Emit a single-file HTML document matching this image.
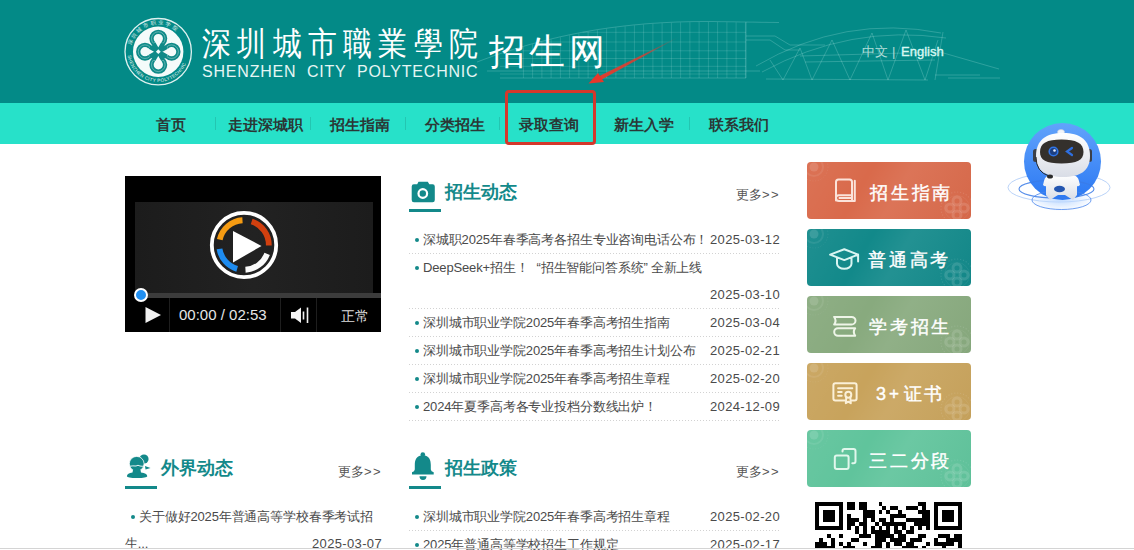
<!DOCTYPE html>
<html><head><meta charset="utf-8">
<style>
*{margin:0;padding:0;box-sizing:border-box}
html,body{width:1134px;height:550px;overflow:hidden;background:#fff;font-family:"Liberation Sans",sans-serif;position:relative}
.abs{position:absolute}
#hdr{position:absolute;left:0;top:0;width:1134px;height:103px;background:#038a87}
#nav{position:absolute;left:0;top:103px;width:1134px;height:40.5px;background:#27e1c9}
.nv{position:absolute;top:113.5px;font-size:14.6px;font-weight:bold;color:#2a3836;line-height:22px;white-space:nowrap}
.sep{position:absolute;top:117px;width:1px;height:13px;background:#23c6b1}
.ttl{position:absolute;font-size:18px;font-weight:bold;color:#13898a;line-height:20px;white-space:nowrap}
.uline{position:absolute;height:3px;width:32px;background:#13898a}
.more{position:absolute;font-size:13px;color:#555;line-height:14px;white-space:nowrap}
ul.lst{position:absolute;list-style:none}
ul.lst li{position:relative;height:28px;font-size:13px;line-height:27px;color:#4a4a4a;white-space:nowrap;background:repeating-linear-gradient(90deg,#d2d2d2 0 1.5px,transparent 1.5px 3px) left bottom/100% 1px no-repeat}
ul.lst li .d{position:absolute;right:0;top:0;letter-spacing:0.35px}
ul.lst li:before{content:"";position:absolute;left:6px;top:12px;width:4px;height:4px;border-radius:2px;background:#13898a}
ul.lst li .t{position:absolute;left:14px;top:0;letter-spacing:-0.15px}
.btn{position:absolute;left:807px;width:164px;height:57px;border-radius:4px;overflow:hidden}
.btn .bt{position:absolute;left:63px;top:19.5px;font-size:18px;letter-spacing:2.8px;color:#fff;-webkit-text-stroke:0.4px #fff;line-height:22px;white-space:nowrap}
.btn svg{position:absolute}
.b2 .bt{left:61px}.b3 .bt,.b5 .bt{left:62px}
.btn .shine{position:absolute;left:0;top:0;right:0;bottom:0;background:linear-gradient(120deg,rgba(255,255,255,0.06) 0%,rgba(255,255,255,0) 35%,rgba(255,255,255,0.07) 55%,rgba(0,0,0,0.02) 100%)}
</style></head><body>
<div id="hdr"></div>
<div id="nav"></div>

<svg class="abs" style="left:0;top:0" width="1134" height="103" viewBox="0 0 1134 103">
 <g fill="none" stroke="rgba(220,255,250,0.2)" stroke-width="1">
  <polyline points="477,62.0 481,60.5 485,59.0 489,57.6 493,56.1 497,54.7 501,53.4 505,52.1 509,50.8 513,49.5 517,48.3 521,47.1 525,45.9 529,44.7 533,43.6 537,42.5 541,41.5 545,40.5 549,39.5 553,38.5 557,37.6 561,36.6 565,35.8 569,34.9 573,34.1 577,33.3 581,32.5 585,31.8 589,31.1 593,30.4 597,29.7 601,29.1 605,28.5 609,27.9 613,27.4 617,26.9 621,26.4 625,25.9 629,25.5 633,25.0 637,24.7 641,24.3 645,23.9 649,23.6 653,23.3 657,23.1 661,22.8 665,22.6 669,22.4 673,22.2 677,22.0 681,21.9 685,21.8 689,21.7 693,21.6 697,21.6 701,21.5 705,21.5 709,21.5 713,21.5 717,21.6 721,21.7 725,21.7 729,21.8 733,21.8 737,21.9 741,22.0 745,22.0 749,22.1 753,22.1 757,22.2 761,22.3 765,22.3 769,22.4 773,22.4 777,22.5 779,22.5"/>
  <path d="M487 71 L 760 71"/>
  <path d="M746 22 L746 78 M500 78 L746 78"/>
  <path d="M523.4 46.8V78M532.6 44.2V78M541.9 41.7V78M551.1 39.4V78M560.4 37.3V78M569.6 35.3V78M578.9 33.4V78M588.1 31.7V78M597.4 30.2V78M606.6 28.8V78M615.9 27.5V78M625.1 26.4V78M634.4 25.4V78M643.6 24.6V78M652.9 23.8V78M662.1 23.2V78M671.4 22.8V78M680.6 22.4V78M689.9 22.2V78M699.1 22.0V78M708.4 22.0V78M717.6 22.1V78M726.9 22.3V78M736.1 22.4V78M745.4 22.5V78" stroke="rgba(220,255,250,0.15)"/>
  <path d="M582.5 32.3H746M539.5 42H746M509.0 50.8H746M500.0 58.5H746M500.0 66.3H746M500.0 74H746" stroke="rgba(220,255,250,0.15)"/>
  <path d="M746 36 L 775 36 L 790 45 L 825 45 M746 40 L 770 40 L 785 50 L 800 50"/>
  <path d="M756 66 Q 845 14 941 33 M 762 72 Q 850 24 946 38"/>
  <path d="M766 79 L 928 80 M 800 56 L 940 52 M 805 62 L 935 60"/>
  <path d="M770 60 L 783 80 L 800 48 L 812 80 L 832 40 L 850 80 L 872 33 L 888 80 L 906 30 L 925 80 L 938 40"/>
  <path d="M940 52 L 999 69 M935 80 L 943 32"/>
  <path d="M935 75 L 980 75 M 948 78 L 1000 78"/>
 </g>
</svg>
<!-- logo emblem -->
<svg class="abs" style="left:118px;top:12px" width="80" height="80" viewBox="0 0 80 80">
  <defs>
    <path id="arcTop" d="M 13 39.5 A 27 27 0 0 1 67 39.5"/>
    <path id="arcBot" d="M 9.5 39.5 A 30.5 30.5 0 0 0 70.5 39.5"/>
  </defs>
  <circle cx="40.2" cy="39.7" r="33.2" fill="none" stroke="#dff1ef" stroke-width="1.3"/>
  <circle cx="40.2" cy="39.7" r="25.2" fill="#f4fbfa"/>
  <text font-size="5.2" fill="#e8f6f4" letter-spacing="2.2"><textPath href="#arcTop" startOffset="6">深圳城市职业学院</textPath></text>
  <text font-size="4.6" fill="#e8f6f4" letter-spacing="0.35"><textPath href="#arcBot" startOffset="4">SHENZHEN CITY POLYTECHNIC</textPath></text>
  <g fill="none" stroke="#0f8a88" stroke-width="4.3" stroke-linecap="butt"><path d="M35.49 31.41 A6.8 6.8 0 1 1 45.11 31.41 M31.81 44.51 A6.8 6.8 0 1 1 31.81 34.89 M48.79 34.89 A6.8 6.8 0 1 1 48.79 44.51 M45.11 47.99 A6.8 6.8 0 1 1 35.49 47.99 M45.11 31.41 L35.49 47.99 M35.49 31.41 L45.11 47.99 M31.81 34.89 L48.79 44.51 M31.81 44.51 L48.79 34.89 M48.79 44.51 L31.81 34.89 M48.79 34.89 L31.81 44.51 M35.49 47.99 L45.11 31.41 M45.11 47.99 L35.49 31.41 "/></g>
  <g fill="none" stroke="rgba(235,248,246,0.6)" stroke-width="0.6"><path d="M35.49 31.41 A6.8 6.8 0 1 1 45.11 31.41 M31.81 44.51 A6.8 6.8 0 1 1 31.81 34.89 M48.79 34.89 A6.8 6.8 0 1 1 48.79 44.51 M45.11 47.99 A6.8 6.8 0 1 1 35.49 47.99"/></g>
  <rect x="38.6" y="38" width="3.4" height="3.4" transform="rotate(45 40.3 39.7)" fill="#f4fbfa"/>
</svg>

<div class="abs" style="left:202px;top:23px;font-size:29px;color:#fff;letter-spacing:6.3px;line-height:36px;white-space:nowrap;transform:scaleY(1.14);transform-origin:0 0">深圳城市職業學院</div>
<div class="abs" style="left:202px;top:63px;font-size:16px;color:#e6f6f4;letter-spacing:0.8px;line-height:18px;white-space:nowrap">SHENZHEN&nbsp; CITY&nbsp; POLYTECHNIC</div>
<div class="abs" style="left:489px;top:29px;font-size:35.5px;letter-spacing:4px;color:#fff;line-height:46px;white-space:nowrap">招生网</div>

<div class="abs" style="left:862px;top:44px;font-size:13px;color:#b0ddd8;line-height:16px;white-space:nowrap">中文</div><div class="abs" style="left:892px;top:44px;font-size:13px;color:#b0ddd8;line-height:16px">|</div><div class="abs" style="left:901px;top:44px;font-size:13px;color:#d8f8f3;line-height:16px;white-space:nowrap;-webkit-text-stroke:0.35px #d8f8f3">English</div>

<!-- nav -->
<div class="nv" style="left:156px">首页</div>
<div class="sep" style="left:215px"></div>
<div class="nv" style="left:228px">走进深城职</div>
<div class="sep" style="left:310px"></div>
<div class="nv" style="left:330px">招生指南</div>
<div class="sep" style="left:405px"></div>
<div class="nv" style="left:425px">分类招生</div>
<div class="sep" style="left:499px"></div>
<div class="nv" style="left:519px">录取查询</div>
<div class="nv" style="left:614px">新生入学</div>
<div class="sep" style="left:689px"></div>
<div class="nv" style="left:709px">联系我们</div>

<svg class="abs" style="left:0;top:0" width="1134" height="160" viewBox="0 0 1134 160">
 <defs><linearGradient id="ag" x1="681" y1="36" x2="595" y2="80" gradientUnits="userSpaceOnUse">
   <stop offset="0" stop-color="#e33a2c" stop-opacity="0"/><stop offset="0.45" stop-color="#e33a2c" stop-opacity="0.8"/><stop offset="1" stop-color="#e63b2d"/></linearGradient></defs>
 <path d="M681.5 35.5 L 596.5 77.5 L 599 81 Z" fill="url(#ag)"/>
 <path d="M588.5 83.5 L 598 73 L 604 82 Z" fill="#e5372a"/>
</svg>
<!-- red box -->
<div class="abs" style="left:504.5px;top:90px;width:91.5px;height:55px;border:3px solid #d5372b;border-radius:4px"></div>

<!-- video -->
<div class="abs" style="left:125px;top:176px;width:256px;height:156px;background:#000"></div>
<div class="abs" style="left:135px;top:202px;width:238px;height:91px;background:linear-gradient(90deg,#1c1c1c,#222 50%,#1c1c1c)"></div>
<div class="abs" style="left:135px;top:293px;width:246px;height:5px;background:#3c3c3c"></div>
<div class="abs" style="left:134px;top:288px;width:14px;height:14px;border-radius:7px;background:#1f8ff2;border:2.5px solid #fff"></div>
<svg class="abs" style="left:125px;top:176px" width="256" height="156" viewBox="125 176 256 156">
  <circle cx="244" cy="245" r="32.2" fill="none" stroke="#fff" stroke-width="3.8"/>
  <g fill="none" stroke-width="5.8">
   <path d="M219.79 239.63 A24.8 24.8 0 0 1 242.49 220.25" stroke="#f59b12"/>
   <path d="M251.66 221.41 A24.8 24.8 0 0 1 268.80 245.43" stroke="#d2400f"/>
   <path d="M267.15 253.89 A24.8 24.8 0 0 1 245.47 269.76" stroke="#fafafa"/>
   <path d="M237.16 268.84 A24.8 24.8 0 0 1 219.51 248.88" stroke="#1e8cf0"/>
  </g>
  <path d="M233 231 L233 262.5 L261.5 246 Z" fill="#fff"/>
  <path d="M145.5 307 L145.5 323 L161 315 Z" fill="#f2f2f2"/>
  <path d="M169.5 298V332 M280.5 298V332 M316.5 298V332" stroke="#1e1e1e" stroke-width="1"/>
  <path d="M291 312 L295 312 L301 307.5 L301 323 L295 318.5 L291 318.5 Z" fill="#f2f2f2"/>
  <path d="M303.5 311.5 V319.5 M307.5 307.5 V323" stroke="#f2f2f2" stroke-width="1.6"/>
</svg>
<div class="abs" style="left:179px;top:307px;font-size:15px;color:#e6e6e6;line-height:16px">00:00 / 02:53</div>
<div class="abs" style="left:341px;top:308.5px;font-size:13.5px;color:#dedede;line-height:16px">正常</div>

<!-- section icons -->
<svg class="abs" style="left:400px;top:170px" width="40" height="40" viewBox="400 170 40 40">
  <path d="M418.5 181.7 h9.3 l1.5 2.5 h3.3 a2.2 2.2 0 0 1 2.2 2.2 v13.7 a2.2 2.2 0 0 1 -2.2 2.2 h-18.7 a2.2 2.2 0 0 1 -2.2 -2.2 v-13.7 a2.2 2.2 0 0 1 2.2 -2.2 h3.3 Z" fill="#13898a"/>
  <circle cx="422.8" cy="193.5" r="4.3" fill="none" stroke="#fff" stroke-width="2.2"/>
</svg>
<svg class="abs" style="left:120px;top:448px" width="40" height="40" viewBox="0 0 40 40">
  <circle cx="24" cy="11" r="4.6" fill="#13898a"/>
  <circle cx="16.7" cy="15.8" r="7.4" fill="#13898a" stroke="#fff" stroke-width="0.8"/>
  <path d="M25 18 L30.5 20 L25.5 21.5 Z" fill="#13898a"/>
  <path d="M9.3 18.3 Q13 17.6 16 18 Q18 16.5 20 18 Q22 18.4 24.3 18.2" fill="none" stroke="#fff" stroke-width="0.9"/>
  <path d="M13 22 L20.5 22 L21 24.5 Q27 25 27.3 28.2 Q27 30 17 30 Q7 30 6.9 28.2 Q7.2 25 12.5 24.5 Z" fill="#13898a"/>
</svg>
<svg class="abs" style="left:405px;top:445px" width="40" height="40" viewBox="0 0 40 40">
  <circle cx="17.8" cy="9.6" r="2.3" fill="#13898a"/>
  <path d="M17.8 10.3 C 11 10.3 9.8 15.5 9.8 20 L9.8 24.5 Q 9.6 26.5 7 27.3 L 7 29.5 L 28.7 29.5 L 28.7 27.3 Q 26 26.5 25.8 24.5 L25.8 20 C 25.8 15.5 24.6 10.3 17.8 10.3 Z" fill="#13898a"/>
  <path d="M14.5 31.3 L21.5 31.3 A3.5 3.6 0 0 1 14.5 31.3 Z" fill="#13898a"/>
</svg>

<!-- 招生动态 -->
<div class="ttl" style="left:445px;top:182px">招生动态</div>
<div class="uline" style="left:409px;top:209px"></div>
<div class="more" style="left:736px;top:188px">更多<span style="letter-spacing:1.5px">&gt;&gt;</span></div>
<ul class="lst" style="left:409px;top:226px;width:371px">
  <li><span class="t">深城职2025年春季高考各招生专业咨询电话公布！</span><span class="d">2025-03-12</span></li>
  <li style="height:55px"><span class="t">DeepSeek+招生！<span style="margin-left:8px"></span>“招生智能问答系统”<span style="margin-left:3px"></span>全新上线</span><span class="d" style="top:27px">2025-03-10</span></li>
  <li><span class="t">深圳城市职业学院2025年春季高考招生指南</span><span class="d">2025-03-04</span></li>
  <li><span class="t">深圳城市职业学院2025年春季高考招生计划公布</span><span class="d">2025-02-21</span></li>
  <li><span class="t">深圳城市职业学院2025年春季高考招生章程</span><span class="d">2025-02-20</span></li>
  <li><span class="t">2024年夏季高考各专业投档分数线出炉！</span><span class="d">2024-12-09</span></li>
</ul>

<!-- 外界动态 -->
<div class="ttl" style="left:161px;top:458px">外界动态</div>
<div class="uline" style="left:125px;top:486px"></div>
<div class="more" style="left:338px;top:465px">更多<span style="letter-spacing:1.5px">&gt;&gt;</span></div>

<!-- 招生政策 -->
<div class="ttl" style="left:445px;top:458px">招生政策</div>
<div class="uline" style="left:409px;top:486px"></div>
<div class="more" style="left:736px;top:465px">更多<span style="letter-spacing:1.5px">&gt;&gt;</span></div>

<ul class="lst" style="left:125px;top:503px;width:257px">
  <li style="height:55px;border:none"><span class="t" style="left:14px">关于做好2025年普通高等学校春季考试招</span><span class="t" style="left:0;top:27px">生...</span><span class="d" style="top:27px">2025-03-07</span></li>
</ul>
<ul class="lst" style="left:409px;top:503px;width:371px">
  <li><span class="t">深圳城市职业学院2025年春季高考招生章程</span><span class="d">2025-02-20</span></li>
  <li><span class="t">2025年普通高等学校招生工作规定</span><span class="d">2025-02-17</span></li>
</ul>

<!-- buttons -->
<div class="btn" style="top:162px;background:#d96a4b">
 <div class="shine"></div>
 <svg style="left:-14px;top:-16px" width="40" height="40" viewBox="0 0 40 40"><circle cx="21" cy="21" r="4.5" fill="rgba(255,255,255,0.13)"/><circle cx="21" cy="21" r="9" fill="none" stroke="rgba(255,255,255,0.08)" stroke-width="2"/><circle cx="21" cy="21" r="14" fill="none" stroke="rgba(255,255,255,0.08)" stroke-width="1" stroke-dasharray="1.2 1.6"/></svg>
 <svg style="left:128px;top:24px" width="44" height="44" viewBox="0 0 44 44"><circle cx="22" cy="22" r="16" fill="none" stroke="rgba(255,255,255,0.1)" stroke-width="1.2" stroke-dasharray="1.2 1.8"/><circle cx="22" cy="22" r="12.5" fill="none" stroke="rgba(255,255,255,0.06)" stroke-width="1"/><g fill="none" stroke="rgba(255,255,255,0.13)" stroke-width="3"><circle cx="22" cy="15" r="4"/><circle cx="15" cy="22" r="4"/><circle cx="29" cy="22" r="4"/><circle cx="22" cy="29" r="4"/></g></svg>
 <svg style="left:18px;top:10px" width="40" height="40" viewBox="0 0 40 40" fill="none" stroke="#fbe3da" stroke-width="2" stroke-linejoin="round" stroke-linecap="round"><path d="M13.5 7.5 h11 a2.5 2.5 0 0 1 2.5 2.5 v19 M11 28.5 v-18.5 a2.5 2.5 0 0 1 2.5 -2.5 M11 10 v16 a3 3 0 0 0 3 3 h15.8 M11 26 a2.7 2.7 0 0 1 2.7 -2.7 H27 M14.5 26 H26.5 M29.8 8.7 V29" /></svg>
 <div class="bt">招生指南</div>
</div>
<div class="btn b2" style="top:229px;background:#12898a">
 <div class="shine"></div>
 <svg style="left:-14px;top:-16px" width="40" height="40" viewBox="0 0 40 40"><circle cx="21" cy="21" r="4.5" fill="rgba(255,255,255,0.13)"/><circle cx="21" cy="21" r="9" fill="none" stroke="rgba(255,255,255,0.08)" stroke-width="2"/><circle cx="21" cy="21" r="14" fill="none" stroke="rgba(255,255,255,0.08)" stroke-width="1" stroke-dasharray="1.2 1.6"/></svg>
 <svg style="left:128px;top:24px" width="44" height="44" viewBox="0 0 44 44"><circle cx="22" cy="22" r="16" fill="none" stroke="rgba(255,255,255,0.1)" stroke-width="1.2" stroke-dasharray="1.2 1.8"/><circle cx="22" cy="22" r="12.5" fill="none" stroke="rgba(255,255,255,0.06)" stroke-width="1"/><g fill="none" stroke="rgba(255,255,255,0.13)" stroke-width="3"><circle cx="22" cy="15" r="4"/><circle cx="15" cy="22" r="4"/><circle cx="29" cy="22" r="4"/><circle cx="22" cy="29" r="4"/></g></svg>
 <svg style="left:18px;top:10px" width="40" height="40" viewBox="0 0 40 40" fill="none" stroke="#d9f5f2" stroke-width="2" stroke-linejoin="round" stroke-linecap="round"><path d="M5.1 15.6 L19.3 10.2 L33.1 15.6 L19.3 21.1 Z M33.1 15.6 V22.5 M12 18.5 V24.7 a7.2 5.1 0 0 0 14.5 0 V18.5"/></svg>
 <div class="bt">普通高考</div>
</div>
<div class="btn b3" style="top:296px;background:#88aa7e">
 <div class="shine"></div>
 <svg style="left:-14px;top:-16px" width="40" height="40" viewBox="0 0 40 40"><circle cx="21" cy="21" r="4.5" fill="rgba(255,255,255,0.13)"/><circle cx="21" cy="21" r="9" fill="none" stroke="rgba(255,255,255,0.08)" stroke-width="2"/><circle cx="21" cy="21" r="14" fill="none" stroke="rgba(255,255,255,0.08)" stroke-width="1" stroke-dasharray="1.2 1.6"/></svg>
 <svg style="left:128px;top:24px" width="44" height="44" viewBox="0 0 44 44"><circle cx="22" cy="22" r="16" fill="none" stroke="rgba(255,255,255,0.1)" stroke-width="1.2" stroke-dasharray="1.2 1.8"/><circle cx="22" cy="22" r="12.5" fill="none" stroke="rgba(255,255,255,0.06)" stroke-width="1"/><g fill="none" stroke="rgba(255,255,255,0.13)" stroke-width="3"><circle cx="22" cy="15" r="4"/><circle cx="15" cy="22" r="4"/><circle cx="29" cy="22" r="4"/><circle cx="22" cy="29" r="4"/></g></svg>
 <svg style="left:18px;top:10px" width="40" height="40" viewBox="0 0 40 40" fill="none" stroke="#eef5e8" stroke-width="2" stroke-linejoin="round" stroke-linecap="round"><path d="M9.1 10.9 H26.5 a4 3.8 0 0 1 0 7.6 H9.1 Q12 14.7 9.1 10.9 Z M30.2 22.2 H13 a3.8 3.8 0 0 0 0 7.6 H30.2 Q27.4 26 30.2 22.2 Z"/></svg>
 <div class="bt">学考招生</div>
</div>
<div class="btn" style="top:363px;background:#c8a35c">
 <div class="shine"></div>
 <svg style="left:-14px;top:-16px" width="40" height="40" viewBox="0 0 40 40"><circle cx="21" cy="21" r="4.5" fill="rgba(255,255,255,0.13)"/><circle cx="21" cy="21" r="9" fill="none" stroke="rgba(255,255,255,0.08)" stroke-width="2"/><circle cx="21" cy="21" r="14" fill="none" stroke="rgba(255,255,255,0.08)" stroke-width="1" stroke-dasharray="1.2 1.6"/></svg>
 <svg style="left:128px;top:24px" width="44" height="44" viewBox="0 0 44 44"><circle cx="22" cy="22" r="16" fill="none" stroke="rgba(255,255,255,0.1)" stroke-width="1.2" stroke-dasharray="1.2 1.8"/><circle cx="22" cy="22" r="12.5" fill="none" stroke="rgba(255,255,255,0.06)" stroke-width="1"/><g fill="none" stroke="rgba(255,255,255,0.13)" stroke-width="3"><circle cx="22" cy="15" r="4"/><circle cx="15" cy="22" r="4"/><circle cx="29" cy="22" r="4"/><circle cx="22" cy="29" r="4"/></g></svg>
 <svg style="left:18px;top:10px" width="40" height="40" viewBox="0 0 40 40" fill="none" stroke="#fbf0d8" stroke-width="2" stroke-linejoin="round" stroke-linecap="round"><path d="M20 27.6 H10.4 a2 2 0 0 1 -2 -2 V12.2 a2 2 0 0 1 2 -2 H29.6 a2 2 0 0 1 2 2 V25.6 a2 2 0 0 1 -2 2 H26.5 M13.1 15.3 H27.3 M13.1 19 H16.7 M13.1 22.7 H16.7"/><circle cx="23.3" cy="21.8" r="3"/><path d="M21.3 24.3 L20.8 30.2 L23.3 28.7 L25.8 30.2 L25.3 24.3"/></svg>
 <div class="bt" style="left:69px;letter-spacing:0">3</div><div class="bt" style="left:82px;letter-spacing:0;font-size:17px">+</div><div class="bt" style="left:97px;letter-spacing:2px">证书</div>
</div>
<div class="btn b5" style="top:430px;background:#60c49c">
 <div class="shine"></div>
 <svg style="left:-14px;top:-16px" width="40" height="40" viewBox="0 0 40 40"><circle cx="21" cy="21" r="4.5" fill="rgba(255,255,255,0.13)"/><circle cx="21" cy="21" r="9" fill="none" stroke="rgba(255,255,255,0.08)" stroke-width="2"/><circle cx="21" cy="21" r="14" fill="none" stroke="rgba(255,255,255,0.08)" stroke-width="1" stroke-dasharray="1.2 1.6"/></svg>
 <svg style="left:128px;top:24px" width="44" height="44" viewBox="0 0 44 44"><circle cx="22" cy="22" r="16" fill="none" stroke="rgba(255,255,255,0.1)" stroke-width="1.2" stroke-dasharray="1.2 1.8"/><circle cx="22" cy="22" r="12.5" fill="none" stroke="rgba(255,255,255,0.06)" stroke-width="1"/><g fill="none" stroke="rgba(255,255,255,0.13)" stroke-width="3"><circle cx="22" cy="15" r="4"/><circle cx="15" cy="22" r="4"/><circle cx="29" cy="22" r="4"/><circle cx="22" cy="29" r="4"/></g></svg>
 <svg style="left:18px;top:10px" width="40" height="40" viewBox="0 0 40 40" fill="none" stroke="#e0f7ec" stroke-width="2" stroke-linejoin="round" stroke-linecap="round"><rect x="9.8" y="15.6" width="13.8" height="13.5" rx="2"/><path d="M17.5 11.6 V11.1 a2 2 0 0 1 2 -2 H28.5 a2 2 0 0 1 2 2 V21.3 a2 2 0 0 1 -2 2 H27.3"/></svg>
 <div class="bt">三二分段</div>
</div>

<!-- robot -->
<svg class="abs" style="left:1000px;top:110px" width="134" height="110" viewBox="1000 110 134 110">
 <defs>
  <linearGradient id="rb" x1="0" y1="0" x2="0" y2="1"><stop offset="0" stop-color="#62a3fb"/><stop offset="1" stop-color="#2b78f3"/></linearGradient>
  <radialGradient id="rg" cx="0.5" cy="0.5" r="0.5"><stop offset="0" stop-color="#bcd8ff" stop-opacity="0.9"/><stop offset="1" stop-color="#bcd8ff" stop-opacity="0"/></radialGradient>
  <linearGradient id="wh" x1="0" y1="0" x2="0" y2="1"><stop offset="0" stop-color="#ffffff"/><stop offset="1" stop-color="#d9dde6"/></linearGradient>
 </defs>
 <ellipse cx="1059" cy="187.5" rx="51" ry="14.5" fill="none" stroke="#a9c8f6" stroke-width="1" opacity="0.8"/>
 <ellipse cx="1061" cy="200" rx="32" ry="11" fill="url(#rg)"/>
 <circle cx="1062.5" cy="161.5" r="38.5" fill="url(#rb)"/>
 <ellipse cx="1056.5" cy="189" rx="37.5" ry="9" fill="none" stroke="#3b7be6" stroke-width="1.1" opacity="0.85"/>
 <ellipse cx="1061.5" cy="200" rx="29.5" ry="9.5" fill="none" stroke="#4a86ec" stroke-width="1" opacity="0.8"/>
 <ellipse cx="1061" cy="132" rx="3.5" ry="2.5" fill="#f2f5fa" stroke="#c7cfdc" stroke-width="0.6"/>
 <rect x="1033" y="149" width="5" height="13" rx="2.5" fill="#3b3f47"/>
 <rect x="1087" y="149" width="5" height="13" rx="2.5" fill="#3b3f47"/>
 <path d="M1047 175 h26 q5 1 6 6 l1 4 q-2 2 -3 1 v9 l-4 5 l-8 -5 l-7 0 l-8 5 l-4 -5 v-9 q-1 1 -3 -1 l1 -4 q1 -5 6 -6 Z" fill="url(#wh)"/>
 
 <ellipse cx="1059.5" cy="189" rx="5.5" ry="3.2" fill="#2456b0"/>
 <path d="M1036 156 C1036 140 1046 133 1063 133 C1080 133 1090 140 1090 156 C1090 171 1080 177 1063 177 C1046 177 1036 171 1036 156 Z" fill="url(#wh)"/>
 <path d="M1040 152 C1040 143 1047 139.5 1061.5 139.5 C1076 139.5 1083.5 143 1083.5 152 C1083.5 160 1077 163.5 1061.5 163.5 C1046 163.5 1040 160 1040 152 Z" fill="#34302c"/>
 <circle cx="1053.5" cy="151.5" r="4.3" fill="#1d3f80" stroke="#2f74e6" stroke-width="1.6"/>
 <circle cx="1054.5" cy="150.5" r="1.3" fill="#e8f0ff"/>
 <path d="M1072 148 L1067 151.5 L1072 155" fill="none" stroke="#2e6fe0" stroke-width="2.2" stroke-linecap="round"/>
 <path d="M1036 157 Q1036 172 1049 176" fill="none" stroke="#2b2b2b" stroke-width="1"/>
 <ellipse cx="1050" cy="176.5" rx="3" ry="2" fill="#2b2b2b"/>
</svg>
<svg class="abs" style="left:815px;top:502px" width="147" height="46" viewBox="0 0 147 46"><path fill="#000" shape-rendering="crispEdges" d="M0.00 0.00h27.79v3.97h-27.79zM31.76 0.00h7.94v3.97h-7.94zM43.67 0.00h7.94v3.97h-7.94zM63.52 0.00h3.97v3.97h-3.97zM103.22 0.00h7.94v3.97h-7.94zM119.10 0.00h27.79v3.97h-27.79zM0.00 3.97h3.97v3.97h-3.97zM23.82 3.97h3.97v3.97h-3.97zM31.76 3.97h7.94v3.97h-7.94zM43.67 3.97h7.94v3.97h-7.94zM67.49 3.97h3.97v3.97h-3.97zM75.43 3.97h7.94v3.97h-7.94zM91.31 3.97h11.91v3.97h-11.91zM107.19 3.97h3.97v3.97h-3.97zM119.10 3.97h3.97v3.97h-3.97zM142.92 3.97h3.97v3.97h-3.97zM0.00 7.94h3.97v3.97h-3.97zM7.94 7.94h11.91v3.97h-11.91zM23.82 7.94h3.97v3.97h-3.97zM47.64 7.94h11.91v3.97h-11.91zM63.52 7.94h3.97v3.97h-3.97zM71.46 7.94h3.97v3.97h-3.97zM83.37 7.94h3.97v3.97h-3.97zM103.22 7.94h11.91v3.97h-11.91zM119.10 7.94h3.97v3.97h-3.97zM127.04 7.94h11.91v3.97h-11.91zM142.92 7.94h3.97v3.97h-3.97zM0.00 11.91h3.97v3.97h-3.97zM7.94 11.91h11.91v3.97h-11.91zM23.82 11.91h3.97v3.97h-3.97zM31.76 11.91h3.97v3.97h-3.97zM47.64 11.91h11.91v3.97h-11.91zM75.43 11.91h15.88v3.97h-15.88zM107.19 11.91h7.94v3.97h-7.94zM119.10 11.91h3.97v3.97h-3.97zM127.04 11.91h11.91v3.97h-11.91zM142.92 11.91h3.97v3.97h-3.97zM0.00 15.88h3.97v3.97h-3.97zM7.94 15.88h11.91v3.97h-11.91zM23.82 15.88h3.97v3.97h-3.97zM31.76 15.88h11.91v3.97h-11.91zM47.64 15.88h3.97v3.97h-3.97zM55.58 15.88h3.97v3.97h-3.97zM63.52 15.88h7.94v3.97h-7.94zM75.43 15.88h3.97v3.97h-3.97zM91.31 15.88h23.82v3.97h-23.82zM119.10 15.88h3.97v3.97h-3.97zM127.04 15.88h11.91v3.97h-11.91zM142.92 15.88h3.97v3.97h-3.97zM0.00 19.85h3.97v3.97h-3.97zM23.82 19.85h3.97v3.97h-3.97zM31.76 19.85h7.94v3.97h-7.94zM43.67 19.85h7.94v3.97h-7.94zM59.55 19.85h3.97v3.97h-3.97zM67.49 19.85h23.82v3.97h-23.82zM99.25 19.85h15.88v3.97h-15.88zM119.10 19.85h3.97v3.97h-3.97zM142.92 19.85h3.97v3.97h-3.97zM0.00 23.82h27.79v3.97h-27.79zM31.76 23.82h3.97v3.97h-3.97zM39.70 23.82h3.97v3.97h-3.97zM47.64 23.82h3.97v3.97h-3.97zM55.58 23.82h3.97v3.97h-3.97zM63.52 23.82h3.97v3.97h-3.97zM71.46 23.82h3.97v3.97h-3.97zM79.40 23.82h3.97v3.97h-3.97zM87.34 23.82h3.97v3.97h-3.97zM95.28 23.82h3.97v3.97h-3.97zM103.22 23.82h3.97v3.97h-3.97zM111.16 23.82h3.97v3.97h-3.97zM119.10 23.82h27.79v3.97h-27.79zM39.70 27.79h3.97v3.97h-3.97zM47.64 27.79h3.97v3.97h-3.97zM55.58 27.79h19.85v3.97h-19.85zM79.40 27.79h7.94v3.97h-7.94zM91.31 27.79h7.94v3.97h-7.94zM11.91 31.76h3.97v3.97h-3.97zM23.82 31.76h3.97v3.97h-3.97zM43.67 31.76h11.91v3.97h-11.91zM59.55 31.76h19.85v3.97h-19.85zM83.37 31.76h7.94v3.97h-7.94zM103.22 31.76h7.94v3.97h-7.94zM123.07 31.76h11.91v3.97h-11.91zM138.95 31.76h7.94v3.97h-7.94zM3.97 35.73h3.97v3.97h-3.97zM15.88 35.73h3.97v3.97h-3.97zM35.73 35.73h7.94v3.97h-7.94zM59.55 35.73h11.91v3.97h-11.91zM75.43 35.73h15.88v3.97h-15.88zM95.28 35.73h11.91v3.97h-11.91zM119.10 35.73h3.97v3.97h-3.97zM131.01 35.73h15.88v3.97h-15.88zM0.00 39.70h11.91v3.97h-11.91zM15.88 39.70h3.97v3.97h-3.97zM23.82 39.70h3.97v3.97h-3.97zM31.76 39.70h3.97v3.97h-3.97zM47.64 39.70h3.97v3.97h-3.97zM59.55 39.70h7.94v3.97h-7.94zM71.46 39.70h3.97v3.97h-3.97zM79.40 39.70h7.94v3.97h-7.94zM91.31 39.70h7.94v3.97h-7.94zM111.16 39.70h3.97v3.97h-3.97zM119.10 39.70h19.85v3.97h-19.85zM142.92 39.70h3.97v3.97h-3.97zM0.00 43.67h19.85v3.97h-19.85zM27.79 43.67h11.91v3.97h-11.91zM55.58 43.67h11.91v3.97h-11.91zM71.46 43.67h3.97v3.97h-3.97zM87.34 43.67h15.88v3.97h-15.88zM107.19 43.67h3.97v3.97h-3.97zM127.04 43.67h3.97v3.97h-3.97zM142.92 43.67h3.97v3.97h-3.97z"/></svg>
<div class="abs" style="left:0;top:548px;width:1134px;height:1px;background:#d4d4d4"></div>
</body></html>
